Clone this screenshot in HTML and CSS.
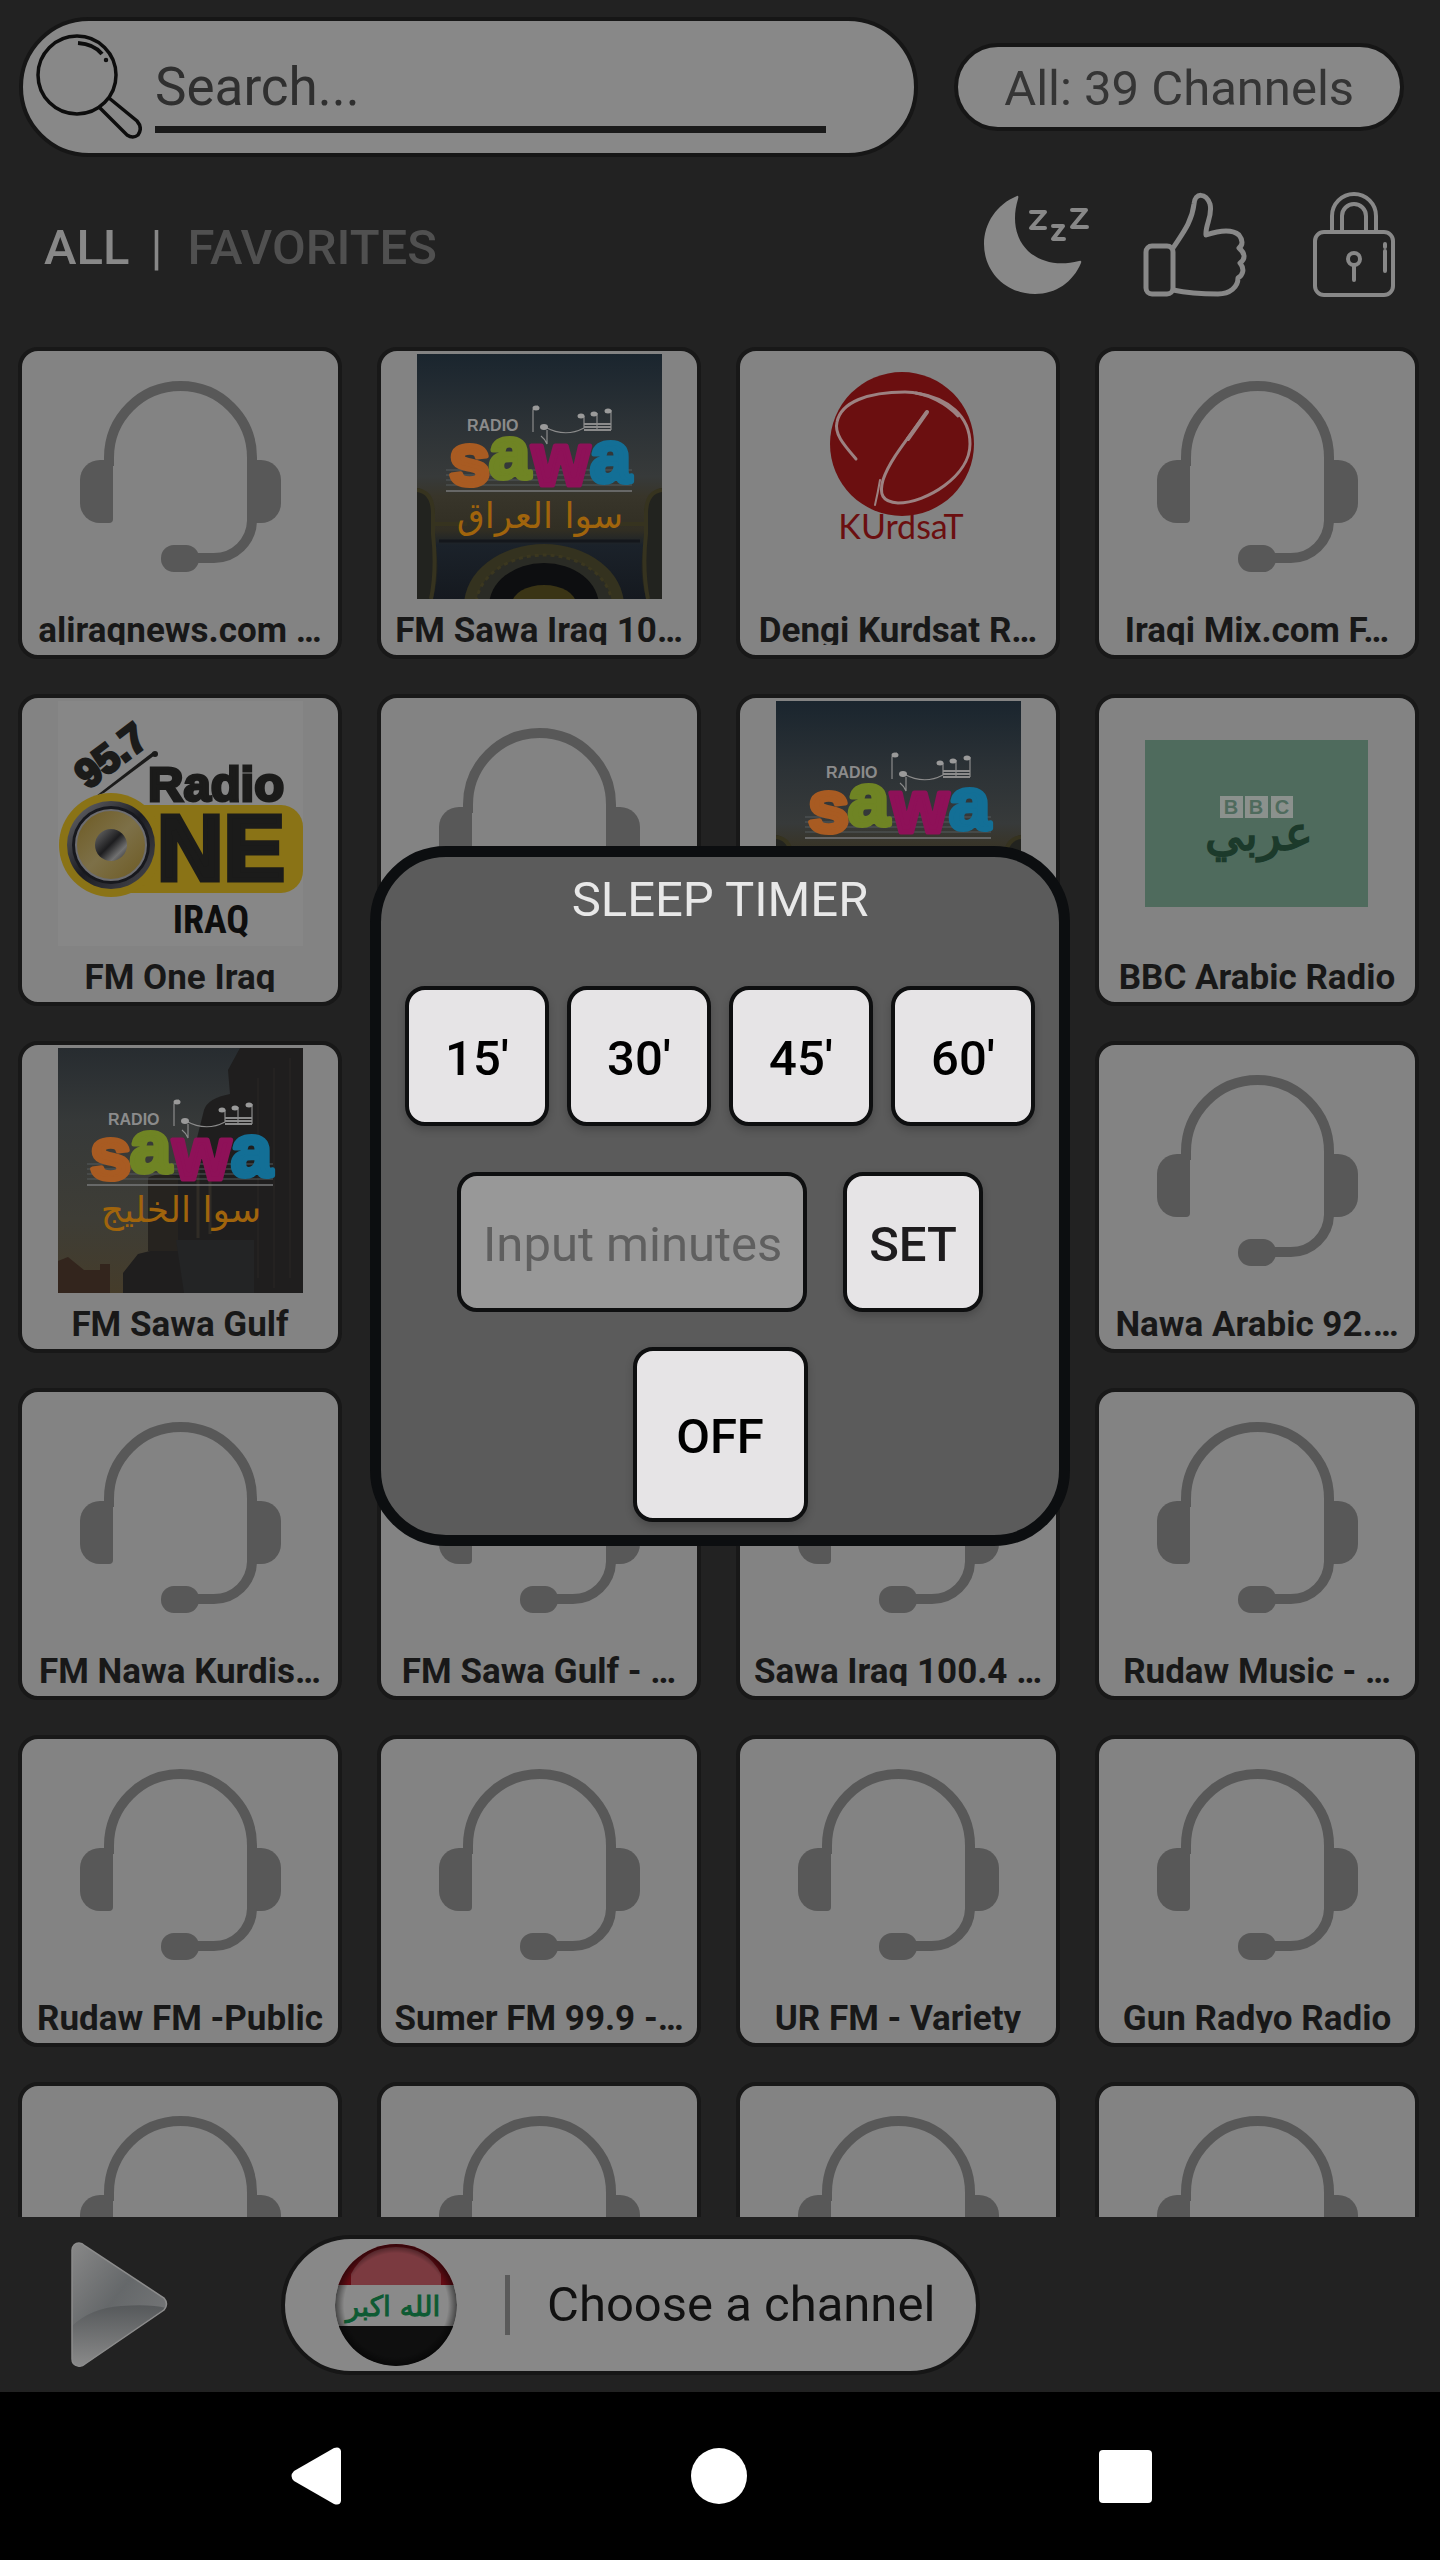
FILE: index.html
```html
<!DOCTYPE html>
<html lang="en">
<head>
    <meta charset="UTF-8">
    <meta name="viewport" content="width=device-width, initial-scale=1.0">
    <title>Radio Iraq</title>
    <link rel="stylesheet" href="styles.css">
</head>
<body>
    <!-- Shared artwork -->
    <svg class="defs" aria-hidden="true">
        <defs>
            <linearGradient id="sky-iraq" x1="0" y1="0" x2="0" y2="1">
                <stop offset="0" stop-color="#1a252e"/>
                <stop offset="0.28" stop-color="#2c3236"/>
                <stop offset="0.5" stop-color="#373a3a"/>
                <stop offset="0.58" stop-color="#38352a"/>
                <stop offset="0.72" stop-color="#312e23"/>
                <stop offset="0.78" stop-color="#1b222a"/>
                <stop offset="1" stop-color="#15191f"/>
            </linearGradient>
            <linearGradient id="sky-gulf" x1="0" y1="0" x2="0" y2="1">
                <stop offset="0" stop-color="#272c30"/>
                <stop offset="0.3" stop-color="#363939"/>
                <stop offset="0.7" stop-color="#3e3d36"/>
                <stop offset="1" stop-color="#453c2a"/>
            </linearGradient>
            <linearGradient id="ring" x1="0" y1="0" x2="1" y2="1">
                <stop offset="0" stop-color="#6c6c70"/>
                <stop offset="0.5" stop-color="#1b1c22"/>
                <stop offset="1" stop-color="#4a4a50"/>
            </linearGradient>
            <linearGradient id="cone" x1="0" y1="0" x2="1" y2="1">
                <stop offset="0" stop-color="#6d5a22"/>
                <stop offset="0.5" stop-color="#7d7048"/>
                <stop offset="1" stop-color="#6d5a22"/>
            </linearGradient>
            <linearGradient id="cap" x1="0" y1="0" x2="1" y2="1">
                <stop offset="0" stop-color="#6e6e6e"/>
                <stop offset="0.48" stop-color="#1d1d1f"/>
                <stop offset="0.75" stop-color="#707070"/>
                <stop offset="1" stop-color="#2c2c2c"/>
            </linearGradient>
            <linearGradient id="play-fill" x1="0" y1="0" x2="1" y2="1">
                <stop offset="0" stop-color="#888"/>
                <stop offset="0.45" stop-color="#65686a"/>
                <stop offset="1" stop-color="#7c7d7e"/>
            </linearGradient>
            <linearGradient id="play-shade" x1="0" y1="0" x2="0" y2="1">
                <stop offset="0" stop-color="#56595b"/>
                <stop offset="1" stop-color="#8a8a8a"/>
            </linearGradient>
            <radialGradient id="flag-edge">
                <stop offset="0.85" stop-color="#000" stop-opacity="0"/>
                <stop offset="1" stop-color="#000" stop-opacity="0.5"/>
            </radialGradient>
            <clipPath id="flag-clip"><circle cx="61" cy="61" r="61"/></clipPath>
            <clipPath id="square-clip"><rect width="245" height="245"/></clipPath>
        </defs>

        <symbol id="headset" viewBox="0 0 245 245">
            <g fill="#585858">
                <path d="M55 106V165Q55 169 51 169H42A20 20 0 0 1 22 149V126A20 20 0 0 1 42 106Z"/>
                <path d="M189 106H203A20 20 0 0 1 223 126V149A20 20 0 0 1 203 169H189Z"/>
                <rect x="103" y="191" width="38" height="27" rx="13"/>
            </g>
            <path d="M51 112V103.500A71.500 71.500 0 0 1 194 103.500V167A38 38 0 0 1 156 204H136" fill="none" stroke="#585858" stroke-width="10"/>
        </symbol>

        <symbol id="sawa-mark" viewBox="0 0 245 245">
            <path d="M29 116H215M29 121H215M29 126H215M29 131H215" stroke="#555b5c" stroke-width="1"/>
            <path d="M29 137H215" stroke="#77797a" stroke-width="1.500"/>
            <text class="logo-text" x="50" y="77" font-size="16" fill="#8b8b8b">RADIO</text>
            <g fill="none" stroke="#8b8b8b" stroke-width="1.200">
                <path d="M116 78V56Q117 53 121 52M128 73Q148 84 167 74V62M180 75V59M194 76V56M130 76V90Q128 85 124 82"/>
                <path d="M167 70H194M167 73H194M167 76H194" stroke-width="2"/>
            </g>
            <g fill="#9a9a9a">
                <ellipse cx="119" cy="54" rx="3.500" ry="2.500"/>
                <ellipse cx="127" cy="73" rx="4" ry="3"/>
                <ellipse cx="164" cy="62" rx="3.500" ry="2.500"/>
                <ellipse cx="177" cy="60" rx="3.500" ry="2.500"/>
                <ellipse cx="191" cy="57" rx="3.500" ry="2.500"/>
            </g>
            <g class="logo-text" font-size="74" stroke-width="5" stroke-linejoin="round">
                <text x="32" y="131" fill="#a85b22" stroke="#a85b22">s</text>
                <text x="173" y="128" fill="#136f96" stroke="#136f96">a</text>
                <text x="72" y="124" fill="#6f8424" stroke="#6f8424">a</text>
                <text x="115" y="131" fill="#8e1158" stroke="#8e1158">w</text>
            </g>
        </symbol>

        <symbol id="sawa-iraq" viewBox="0 0 245 245">
            <g clip-path="url(#square-clip)">
                <rect width="245" height="245" fill="url(#sky-iraq)"/>
                <path d="M0 134Q18 138 18 165V190Q24 215 16 245H0Z" fill="#22231f"/>
                <path d="M245 134Q227 138 227 165V190Q221 215 229 245H245Z" fill="#22231f"/>
                <path d="M0 136Q16 138 16 160V180Q20 215 14 245M245 136Q229 138 229 160V180Q225 215 231 245M16 170H50M196 170H229" fill="none" stroke="#36331f" stroke-width="4"/>
                <path d="M22 187H223" stroke="#14171c" stroke-width="3"/>
                <ellipse cx="127" cy="252" rx="80" ry="62" fill="#34321f"/>
                <ellipse cx="127" cy="252" rx="68" ry="51" fill="#2a2b25" stroke="#3b371f" stroke-width="3" stroke-dasharray="4 4"/>
                <ellipse cx="127" cy="252" rx="55" ry="43" fill="#0d0e10"/>
                <ellipse cx="127" cy="250" rx="32" ry="19" fill="#3a3415"/>
            </g>
            <use href="#sawa-mark" width="245" height="245"/>
            <text class="logo-arabic" x="123" y="174" font-size="36" fill="#a0640c" text-anchor="middle">سوا العراق</text>
        </symbol>

        <symbol id="sawa-gulf" viewBox="0 0 245 245">
            <rect width="245" height="245" fill="url(#sky-gulf)"/>
            <path d="M0 213L10 209L26 222H42V216H52V245H0Z" fill="#33251d"/>
            <path d="M65 245V225L80 206L92 203L90 130Q110 122 130 126L146 62Q150 50 172 46L170 22L182 0H245V245Z" fill="#1f1e1e"/>
            <path d="M90 203V130Q104 122 120 130V203Z" fill="#26231f"/>
            <path d="M118 192H196V245H126Z" fill="#232425"/>
            <path d="M140 120V190M152 120V186" stroke="#302c26" stroke-width="3"/>
            <path d="M200 30V230M216 20V240M232 10V230" stroke="#242221" stroke-width="2"/>
            <use href="#sawa-mark" width="245" height="245"/>
            <text class="logo-arabic" x="123" y="174" font-size="36" fill="#a0640c" text-anchor="middle">سوا الخليج</text>
        </symbol>
    </svg>

    <div class="app">
        <header class="topbar">
            <div class="search">
                <svg class="search-icon" viewBox="0 0 106 106" fill="none" stroke="#0d0d0d" stroke-width="3.500" aria-hidden="true">
                    <circle cx="41" cy="41" r="39"/>
                    <path d="M64 74L91 101Q97 105 102 101Q107 94 101 87L73 64"/>
                    <path d="M42 9Q58 10 66 20" stroke-width="4"/>
                    <circle cx="70" cy="26" r="1" stroke-width="2.500"/>
                </svg>
                <input class="search-input" type="text" placeholder="Search..." aria-label="Search">
            </div>
            <div class="count">All: 39 Channels</div>
        </header>

        <nav class="tabs">
            <button type="button" class="tab active">ALL</button>
            <span class="tab-divider">|</span>
            <button type="button" class="tab">FAVORITES</button>
            <div class="tools">
                <button type="button" class="tool" aria-label="Sleep timer">
                    <svg viewBox="0 0 106 106" aria-hidden="true">
                        <path d="M34 4Q36 3 35 7C22 50 53 80 96 69Q99 68 98 71C90 90 73 102 52 102C23 102 1 80 1 52C1 31 14 12 34 4Z" fill="#888"/>
                        <path d="M48 20H62L48 36H62M70 34H80L70 47H81M89 18H103L89 35H104" fill="none" stroke="#888" stroke-width="4" stroke-linejoin="round" stroke-linecap="round"/>
                    </svg>
                </button>
                <button type="button" class="tool" aria-label="Rate the app">
                    <svg viewBox="0 0 106 106" fill="none" stroke="#888" stroke-width="5" stroke-linejoin="round" aria-hidden="true">
                        <path d="M31 56C40 42 50 30 52 12C53 0 64 1 68 12C71 24 63 33 64 43C76 39 90 37 97 43C101 48 101 53 97 56C103 61 104 67 98 71C103 77 101 83 96 86C96 95 88 102 76 102C60 102 45 101 31 98"/>
                        <rect x="4" y="54" width="27" height="48" rx="6"/>
                    </svg>
                </button>
                <button type="button" class="tool" aria-label="Unlock">
                    <svg viewBox="0 0 106 106" fill="none" stroke="#888" stroke-width="4" aria-hidden="true">
                        <rect x="14" y="40" width="78" height="63" rx="9"/>
                        <path d="M31 39V24A22 22 0 0 1 75 24V39M41 39V24A12 12 0 0 1 65 24V39"/>
                        <circle cx="53" cy="67" r="6"/>
                        <path d="M53 73V88M84 59V79M84 52V55" stroke-linecap="round"/>
                    </svg>
                </button>
            </div>
        </nav>

        <main class="channels">
            <a class="card" href="#">
                <svg class="cover" aria-hidden="true"><use href="#headset"/></svg>
                <span class="title">aliraqnews.com …</span>
            </a>
            <a class="card" href="#">
                <svg class="cover" aria-hidden="true"><use href="#sawa-iraq"/></svg>
                <span class="title">FM Sawa Iraq 10…</span>
            </a>
            <a class="card" href="#">
                <svg class="cover" viewBox="0 0 245 245" aria-hidden="true">
                    <circle cx="126" cy="90" r="72" fill="#6b0f10"/>
                    <g fill="none" stroke="#9c8282" stroke-linecap="round">
                        <path d="M80 105C68 91 58 80 61 68C65 48 92 38 129 38C152 38 172 51 182 62" stroke-width="3"/>
                        <path d="M140 39C172 44 194 62 194 90C194 122 150 149 122 149C106 148 103 140 107 126C113 108 126 92 151 58" stroke-width="3"/>
                        <path d="M104 126Q102 138 99 151" stroke-width="2"/>
                        <path d="M151 58L132 85" stroke-width="4"/>
                    </g>
                    <text class="logo-thin" x="125" y="185" font-size="34" fill="#6b0f10" text-anchor="middle">KUrdsaT</text>
                </svg>
                <span class="title">Dengi Kurdsat R…</span>
            </a>
            <a class="card" href="#">
                <svg class="cover" aria-hidden="true"><use href="#headset"/></svg>
                <span class="title">Iraqi Mix.com F…</span>
            </a>

            <a class="card" href="#">
                <svg class="cover" viewBox="0 0 245 245" aria-hidden="true">
                    <rect width="245" height="245" fill="#878787"/>
                    <text class="logo-text" transform="translate(30 89) rotate(-37)" font-size="40" fill="#1b1b1a" stroke="#1b1b1a" stroke-width="3">95.7</text>
                    <path d="M38 95L46 92L97 54L95 51Z" fill="#1b1b1a"/>
                    <circle cx="97" cy="53" r="3" fill="#1b1b1a"/>
                    <rect x="40" y="104" width="205" height="88" rx="22" fill="#8a7316"/>
                    <circle cx="53" cy="144" r="52" fill="#8a7316"/>
                    <circle cx="53" cy="144" r="44" fill="url(#ring)"/>
                    <circle cx="53" cy="144" r="39" fill="#17181d"/>
                    <circle cx="53" cy="144" r="35" fill="url(#cone)" stroke="#6d6d70" stroke-width="2"/>
                    <circle cx="53" cy="144" r="16" fill="url(#cap)"/>
                    <text class="logo-text" x="90" y="100" font-size="49" fill="#1b1b1a" stroke="#1b1b1a" stroke-width="3">Radio</text>
                    <text class="logo-text" x="99" y="179" font-size="92" fill="#1b1b1a" stroke="#1b1b1a" stroke-width="5">NE</text>
                    <text class="logo-hand" x="153" y="232" font-size="38" fill="#0e0e0e" text-anchor="middle">IRAQ</text>
                </svg>
                <span class="title">FM One Iraq</span>
            </a>
            <a class="card" href="#">
                <svg class="cover" aria-hidden="true"><use href="#headset"/></svg>
            </a>
            <a class="card" href="#">
                <svg class="cover" aria-hidden="true"><use href="#sawa-iraq"/></svg>
            </a>
            <a class="card" href="#">
                <svg class="cover" viewBox="0 0 245 245" aria-hidden="true">
                    <rect x="10" y="39" width="223" height="167" fill="#4f6b5d"/>
                    <path d="M85 95h23v22h-23zM110 95h23v22h-23zM136 95h22v22h-22z" fill="#8b918d"/>
                    <g class="logo-text" font-size="20" fill="#4f6b5d" text-anchor="middle">
                        <text x="96" y="113">B</text>
                        <text x="121" y="113">B</text>
                        <text x="147" y="113">C</text>
                    </g>
                    <text class="logo-arabic" x="124" y="149" font-size="48" fill="#1c3a2b" stroke="#1c3a2b" stroke-width="1.500" text-anchor="middle">عربي</text>
                </svg>
                <span class="title">BBC Arabic Radio</span>
            </a>

            <a class="card" href="#">
                <svg class="cover" aria-hidden="true"><use href="#sawa-gulf"/></svg>
                <span class="title">FM Sawa Gulf</span>
            </a>
            <a class="card" href="#">
                <svg class="cover" aria-hidden="true"><use href="#headset"/></svg>
            </a>
            <a class="card" href="#">
                <svg class="cover" aria-hidden="true"><use href="#headset"/></svg>
            </a>
            <a class="card" href="#">
                <svg class="cover" aria-hidden="true"><use href="#headset"/></svg>
                <span class="title">Nawa Arabic 92.…</span>
            </a>

            <a class="card" href="#">
                <svg class="cover" aria-hidden="true"><use href="#headset"/></svg>
                <span class="title">FM Nawa Kurdis…</span>
            </a>
            <a class="card" href="#">
                <svg class="cover" aria-hidden="true"><use href="#headset"/></svg>
                <span class="title">FM Sawa Gulf - …</span>
            </a>
            <a class="card" href="#">
                <svg class="cover" aria-hidden="true"><use href="#headset"/></svg>
                <span class="title">Sawa Iraq 100.4 …</span>
            </a>
            <a class="card" href="#">
                <svg class="cover" aria-hidden="true"><use href="#headset"/></svg>
                <span class="title">Rudaw Music - …</span>
            </a>

            <a class="card" href="#">
                <svg class="cover" aria-hidden="true"><use href="#headset"/></svg>
                <span class="title">Rudaw FM -Public</span>
            </a>
            <a class="card" href="#">
                <svg class="cover" aria-hidden="true"><use href="#headset"/></svg>
                <span class="title">Sumer FM 99.9 -…</span>
            </a>
            <a class="card" href="#">
                <svg class="cover" aria-hidden="true"><use href="#headset"/></svg>
                <span class="title">UR FM - Variety</span>
            </a>
            <a class="card" href="#">
                <svg class="cover" aria-hidden="true"><use href="#headset"/></svg>
                <span class="title">Gun Radyo Radio</span>
            </a>

            <a class="card" href="#">
                <svg class="cover" aria-hidden="true"><use href="#headset"/></svg>
            </a>
            <a class="card" href="#">
                <svg class="cover" aria-hidden="true"><use href="#headset"/></svg>
            </a>
            <a class="card" href="#">
                <svg class="cover" aria-hidden="true"><use href="#headset"/></svg>
            </a>
            <a class="card" href="#">
                <svg class="cover" aria-hidden="true"><use href="#headset"/></svg>
            </a>
        </main>

        <footer class="player">
            <button type="button" class="play" aria-label="Play">
                <svg viewBox="0 0 98 126" aria-hidden="true">
                    <path d="M1 8Q2 1 8 1Q11 1 14 4L93 56Q98 62 93 68L14 122Q11 125 7 124Q1 123 1 117Z" fill="url(#play-fill)"/>
                    <path d="M1 84Q20 66 50 64Q80 62 95 66L14 122Q11 125 7 124Q1 123 1 117Z" fill="url(#play-shade)"/>
                    <path d="M1 8Q2 1 8 1Q11 1 14 4L93 56Q98 62 93 68L14 122Q11 125 7 124Q1 123 1 117Z" fill="none" stroke="#8c8c8c" stroke-width="1.500"/>
                </svg>
            </button>
            <div class="now">
                <svg class="flag" viewBox="0 0 122 122" aria-hidden="true">
                    <g clip-path="url(#flag-clip)">
                        <rect width="122" height="41" fill="#650c14"/>
                        <path d="M16 41V30Q30 3 61 3Q92 3 106 30V41Z" fill="#7b3a40"/>
                        <rect y="41" width="122" height="41" fill="#8a8a8a"/>
                        <rect y="82" width="122" height="40" fill="#0f0f0f"/>
                        <text class="logo-arabic" x="58" y="72" font-size="28" fill="#0d5a33" stroke="#0d5a33" stroke-width="1" text-anchor="middle">الله اكبر</text>
                        <circle cx="61" cy="61" r="61" fill="url(#flag-edge)"/>
                    </g>
                </svg>
                <span class="now-divider"></span>
                <span class="now-title">Choose a channel</span>
            </div>
        </footer>

        <!-- Sleep timer dialog -->
        <div class="overlay">
            <form class="dialog" role="dialog" aria-labelledby="dialog-title">
                <h1 class="dialog-title" id="dialog-title">SLEEP TIMER</h1>
                <div class="presets">
                    <button type="button" class="btn">15'</button>
                    <button type="button" class="btn">30'</button>
                    <button type="button" class="btn">45'</button>
                    <button type="button" class="btn">60'</button>
                </div>
                <div class="custom">
                    <input class="minutes" type="text" inputmode="numeric" placeholder="Input minutes" aria-label="Input minutes">
                    <button type="button" class="btn btn-set">SET</button>
                </div>
                <button type="button" class="btn btn-off">OFF</button>
            </form>
        </div>
    </div>

    <nav class="system-nav">
        <button type="button" class="sys" aria-label="Back">
            <svg viewBox="0 0 60 60" aria-hidden="true"><path d="M57 5V55Q56 60 50 58L10 35Q5 30 10 25L50 2Q56 0 57 5Z" fill="#fff"/></svg>
        </button>
        <button type="button" class="sys" aria-label="Home">
            <svg viewBox="0 0 60 60" aria-hidden="true"><circle cx="29" cy="30" r="28" fill="#fff"/></svg>
        </button>
        <button type="button" class="sys" aria-label="Recent apps">
            <svg viewBox="0 0 60 60" aria-hidden="true"><rect x="3" y="4" width="53" height="53" rx="4" fill="#fff"/></svg>
        </button>
    </nav>
</body>
</html>
```

FILE: styles.css
```css
* {
    box-sizing: border-box;
}
body {
    margin: 0;
    height: 100vh;
    display: flex;
    flex-direction: column;
    background-color: #000;
    font-family: Roboto, "DejaVu Sans", sans-serif;
    font-size: 49px;
}
button {
    padding: 0;
    border: none;
    background: none;
    color: inherit;
    font: inherit;
    cursor: pointer;
}
svg {
    display: block;
}
.defs {
    position: absolute;
    width: 0;
    height: 0;
}
.app {
    position: relative;
    flex: 1;
    min-height: 0;
    display: flex;
    flex-direction: column;
    background-color: #222;
}

/* Top bar */
.topbar {
    display: grid;
    grid-template-columns: 2fr 1fr;
    align-items: center;
    gap: 36px;
    padding: 17px 36px 17px 19px;
}
.search {
    display: flex;
    align-items: center;
    height: 140px;
    padding: 0 88px 0 13px;
    border: 4px solid #161616;
    border-radius: 70px;
    background-color: #888;
}
.search-icon {
    width: 106px;
    height: 106px;
    margin-right: 13px;
}
.search-input {
    flex: 1;
    min-width: 0;
    height: 92px;
    padding: 6px 0 0;
    border: none;
    border-bottom: 7px solid #1a1a1a;
    background: none;
    font: inherit;
    font-size: 53px;
    outline: none;
}
.search-input::placeholder {
    color: #2f2f2f;
    opacity: 1;
}
.count {
    height: 88px;
    padding-top: 2px;
    border: 4px solid #161616;
    border-radius: 44px;
    background-color: #888;
    color: #353535;
    line-height: 80px;
    text-align: center;
    white-space: nowrap;
}

/* Tabs and tools */
.tabs {
    display: flex;
    align-items: center;
    padding: 18px 33px 49px 44px;
    color: #888;
    font-weight: 500;
}
.tab,
.tab-divider {
    padding-top: 4px;
}
.tab {
    color: #505050;
}
.tab.active {
    color: #888;
}
.tab-divider {
    margin: 0 25px 0 21px;
    font-weight: 400;
}
.tools {
    display: flex;
    gap: 53px;
    margin-left: auto;
}
.tool svg {
    width: 106px;
    height: 106px;
}

/* Channel grid */
.channels {
    flex: 1;
    min-height: 0;
    display: grid;
    grid-template-columns: repeat(4, 1fr);
    grid-auto-rows: 312px;
    gap: 35px;
    padding: 0 21px 0 18px;
    overflow: hidden;
}
.card {
    display: flex;
    flex-direction: column;
    align-items: center;
    padding: 3px 10px 10px;
    border: 4px solid #181818;
    border-radius: 20px;
    background-color: #838383;
    color: #181818;
    text-decoration: none;
}
.cover {
    width: 245px;
    height: 245px;
    flex-shrink: 0;
}
.title {
    max-width: 100%;
    height: 35px;
    margin-top: 11px;
    overflow: hidden;
    font-size: 35px;
    font-weight: 700;
    line-height: 41px;
    white-space: nowrap;
}
.logo-text {
    font-family: "Liberation Sans", sans-serif;
    font-weight: 700;
}
.logo-thin {
    font-family: Lato, sans-serif;
    font-weight: 400;
}
.logo-hand {
    font-family: "Roboto Condensed", Roboto, sans-serif;
    font-weight: 700;
}
.logo-arabic {
    font-family: "DejaVu Sans", sans-serif;
}

/* Player bar */
.player {
    display: flex;
    align-items: center;
    gap: 112px;
    height: 175px;
    padding: 0 71px;
}
.play svg {
    width: 98px;
    height: 126px;
}
.now {
    display: flex;
    align-items: center;
    height: 140px;
    padding: 0 41px 0 50px;
    border: 4px solid #161616;
    border-radius: 70px;
    background-color: #888;
    color: #111;
}
.flag {
    width: 122px;
    height: 122px;
}
.now-divider {
    width: 5px;
    height: 60px;
    margin: 0 37px 0 48px;
    background-color: #5a5a5a;
}

/* Sleep timer dialog */
.overlay {
    position: absolute;
    inset: 0;
    display: flex;
    align-items: center;
    justify-content: center;
}
.dialog {
    width: 700px;
    display: flex;
    flex-direction: column;
    align-items: center;
    padding: 13px 0;
    border: 11px solid #0c0e10;
    border-radius: 76px;
    background-color: #5b5b5b;
}
.dialog-title {
    margin: 0 0 56px;
    color: #e8e8e8;
    font-size: 49px;
    font-weight: 400;
    line-height: 60px;
}
.presets {
    display: flex;
    gap: 18px;
    margin-bottom: 46px;
}
.custom {
    display: flex;
    gap: 36px;
    margin-bottom: 35px;
}
.btn {
    width: 144px;
    height: 140px;
    padding-top: 4px;
    border: 4px solid #0e0f10;
    border-radius: 20px;
    background-color: #e6e4e6;
    box-shadow: 0 4px 8px rgba(0, 0, 0, 0.2);
    color: #000;
    font-weight: 500;
}
.btn-set {
    width: 140px;
    color: #1e1c1e;
}
.btn-off {
    width: 175px;
    height: 175px;
}
.minutes {
    width: 350px;
    height: 140px;
    padding: 4px 16px 0 22px;
    border: 4px solid #0e0f10;
    border-radius: 20px;
    background-color: #989898;
    font: inherit;
    outline: none;
}
.minutes::placeholder {
    color: #5f5f5f;
    opacity: 1;
}

/* Android navigation bar */
.system-nav {
    display: flex;
    align-items: center;
    justify-content: center;
    gap: 346px;
    height: 168px;
}
.sys svg {
    width: 60px;
    height: 60px;
}
```
